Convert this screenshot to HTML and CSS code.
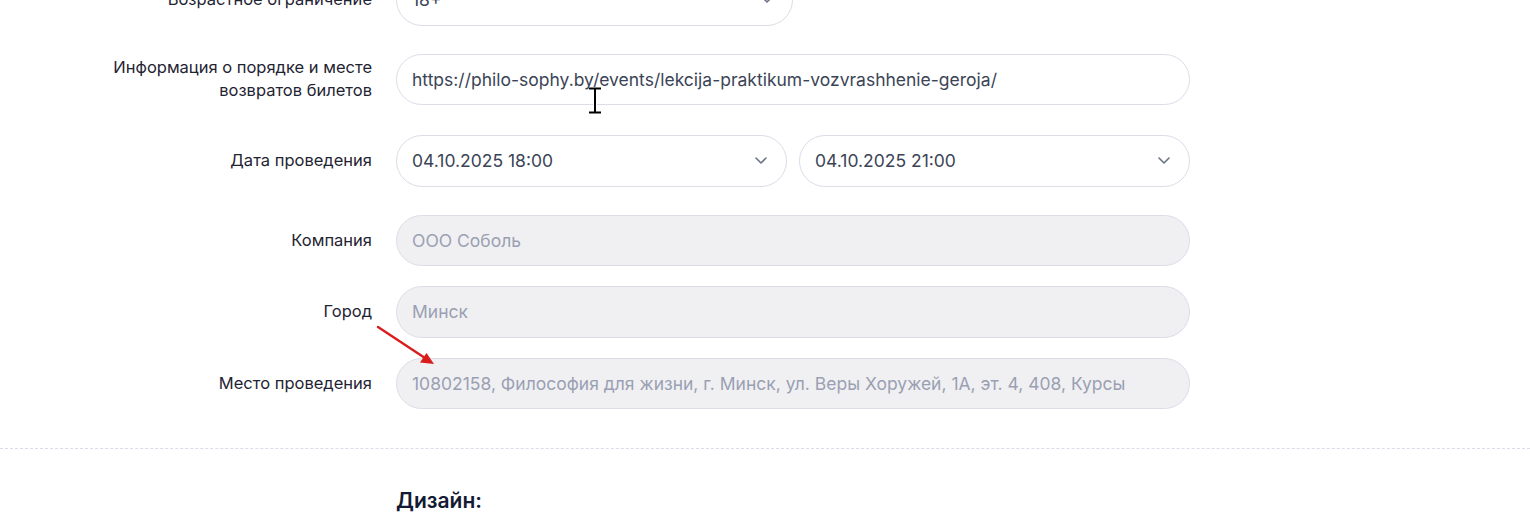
FILE: index.html
```html
<!DOCTYPE html>
<html lang="ru">
  <head>
    <meta charset="UTF-8" />
    <meta name="viewport" content="width=device-width, initial-scale=1.0" />
    <title>Событие — настройки</title>
    <link rel="stylesheet" href="styles.css">
  </head>
  <body>
    <div class="page">
      <div class="form">
        <div class="row row-gap-28">
          <label class="label">Возрастное ограничение</label>
          <div class="field field-half select">
            <span>18+</span>
            <svg class="chevron" viewBox="0 0 12 7" width="12" height="7"><path d="M1 1l5 5 5-5" /></svg>
          </div>
        </div>

        <div class="row row-gap-30">
          <label class="label">Информация о порядке и месте возвратов билетов</label>
          <div class="field">https://philo-sophy.by/events/lekcija-praktikum-vozvrashhenie-geroja/</div>
        </div>

        <div class="row row-gap-28">
          <label class="label">Дата проведения</label>
          <div class="pair">
            <div class="field select">
              <span>04.10.2025 18:00</span>
              <svg class="chevron" viewBox="0 0 12 7" width="12" height="7"><path d="M1 1l5 5 5-5" /></svg>
            </div>
            <div class="field select">
              <span>04.10.2025 21:00</span>
              <svg class="chevron" viewBox="0 0 12 7" width="12" height="7"><path d="M1 1l5 5 5-5" /></svg>
            </div>
          </div>
        </div>

        <div class="row">
          <label class="label">Компания</label>
          <div class="field disabled">ООО Соболь</div>
        </div>

        <div class="row">
          <label class="label">Город</label>
          <div class="field disabled">Минск</div>
        </div>

        <div class="row">
          <label class="label">Место проведения</label>
          <div class="field disabled">10802158, Философия для жизни, г. Минск, ул. Веры Хоружей, 1А, эт. 4, 408, Курсы</div>
        </div>
      </div>

      <div class="divider"></div>

      <h3 class="section-title">Дизайн:</h3>

      <!-- mouse cursor from the screenshot -->
      <svg class="cursor" width="14" height="27" viewBox="0 0 14 27">
        <path d="M1 1.5h12M7 1.5v24M1 25.5h12" stroke="#fff" stroke-width="4" />
        <path d="M1 1.5h12M7 1.5v24M1 25.5h12" stroke="#000" stroke-width="2" />
      </svg>

      <!-- red annotation arrow -->
      <svg class="annotation" width="64" height="44" viewBox="0 0 64 44">
        <path d="M2 2L52 35" stroke="#d91c1c" stroke-width="2.4" stroke-linecap="round" />
        <path d="M58 39L44 37.5L50.5 28Z" fill="#d91c1c" />
      </svg>
    </div>
  </body>
</html>
```

FILE: styles.css
```css
* {
  margin: 0;
  padding: 0;
  box-sizing: border-box;
}
body {
  background-color: #fff;
  font-family: Inter, "Noto Sans", sans-serif;
  color: #1f2433;
  overflow: hidden;
}
.page {
  position: relative;
  display: flow-root;
  min-height: 517px;
}
.form {
  margin-top: -26px;
  padding-left: 96px;
}
.row {
  display: grid;
  grid-template-columns: 276px 794px;
  column-gap: 24px;
  align-items: center;
  margin-bottom: 20px;
}
.row:last-child {
  margin-bottom: 0;
}
.row-gap-28 {
  margin-bottom: 28px;
}
.row-gap-30 {
  margin-bottom: 30px;
}
.label {
  font-size: 16.5px;
  line-height: 23px;
  text-align: right;
  color: #1f2433;
}
.field {
  height: 51.5px;
  display: flex;
  align-items: center;
  padding: 0 15px;
  border: 1px solid #dcdde8;
  border-radius: 26px;
  background: #fff;
  font-size: 17.5px;
  color: #3b4456;
  white-space: nowrap;
  overflow: hidden;
}
.field-half {
  width: 397px;
}
.select {
  justify-content: space-between;
  padding-right: 19px;
}
.chevron {
  fill: none;
  stroke: #6b7386;
  stroke-width: 1.6;
  stroke-linecap: round;
  stroke-linejoin: round;
}
.pair {
  display: grid;
  grid-template-columns: 1fr 1fr;
  gap: 12px;
}
.disabled {
  background: #f0f0f3;
  color: #9aa0b2;
}
.divider {
  margin-top: 39px;
  border-top: 1px dashed #dcdce8;
}
.section-title {
  margin-top: 40px;
  padding-left: 396px;
  font-size: 21px;
  line-height: 24px;
  font-weight: 600;
  color: #131a33;
}
.cursor {
  position: absolute;
  left: 588px;
  top: 87px;
}
.annotation {
  position: absolute;
  left: 376px;
  top: 325px;
}
```
